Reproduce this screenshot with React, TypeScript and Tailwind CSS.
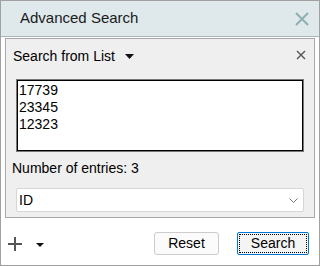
export default function App() {
  return (
    <div className="w-[320px] h-[266px] border border-[#a0a0a0] bg-white flex flex-col font-['Liberation_Sans',Arial,sans-serif] text-black">
      {/* Title bar */}
      <div className="h-[36px] shrink-0 bg-[#dfe9eb] border-b border-[#aab6b8] flex items-center justify-between pl-[19px] pr-[10px]">
        <span className="text-[15px] text-[#1a1a1a]">Advanced Search</span>
        <svg width="14" height="14" viewBox="0 0 14 14" className="mt-[1px]">
          <path d="M1 1 L13 13 M13 1 L1 13" stroke="#8eb0b2" strokeWidth="2" />
        </svg>
      </div>

      {/* Search from list panel */}
      <div className="mt-[1px] mx-[4px] h-[180px] shrink-0 border border-[#a8a8a8] bg-[#efefef] flex flex-col">
        <div className="h-[34px] flex items-center justify-between pl-[7px] pr-[8px]">
          <div className="flex items-center gap-[10px]">
            <span className="text-[14px]">Search from List</span>
            <svg width="9" height="5" viewBox="0 0 9 5">
              <path d="M0 0 H9 L4.5 5 Z" fill="#111" />
            </svg>
          </div>
          <svg width="10" height="10" viewBox="0 0 10 10" className="mb-[2px]">
            <path d="M1 1 L9 9 M9 1 L1 9" stroke="#555" strokeWidth="1.4" />
          </svg>
        </div>

        <div className="mx-[10px] mt-[6px] h-[73px] border border-[#777] bg-white shadow-[inset_0_0_0_1px_#000] pl-[2px] pt-[2px] text-[14px] leading-[17px]">
          <div>17739</div>
          <div>23345</div>
          <div>12323</div>
        </div>

        <div className="mt-[7px] h-[18px] leading-[18px] pl-[6px] text-[14px]">
          Number of entries: 3
        </div>

        <div className="mx-[10px] mt-[11px] h-[24px] border border-[#d6d6d6] rounded-[2px] bg-white flex items-center justify-between pl-[2px] pr-[5px]">
          <span className="text-[14px]">ID</span>
          <svg width="9" height="5" viewBox="0 0 9 5">
            <path d="M0.5 0.5 L4.5 4.5 L8.5 0.5" stroke="#777" strokeWidth="1" fill="none" />
          </svg>
        </div>
      </div>

      {/* Bottom toolbar */}
      <div className="flex-1 flex items-center justify-between pl-[7px] pr-[10px] pt-[3px]">
        <div className="flex items-center">
          <svg width="14" height="14" viewBox="0 0 14 14" className="mt-[1px]">
            <path d="M7 0 V14 M0 7 H14" stroke="#555" strokeWidth="2" />
          </svg>
          <svg width="8" height="4" viewBox="0 0 8 4" className="ml-[14px] mt-[3px]">
            <path d="M0 0 H8 L4 4 Z" fill="#111" />
          </svg>
        </div>
        <div className="flex items-center gap-[18px]">
          <button className="w-[65px] h-[23px] border border-[#cccccc] rounded-[3px] bg-[#fbfbfb] text-[14px] leading-none">
            Reset
          </button>
          <button className="w-[72px] h-[23px] border border-[#0078d7] rounded-[2px] bg-[#f4f4f4] p-[1px]">
            <span className="w-full h-full flex items-center justify-center border border-dotted border-black text-[14px] leading-none">
              Search
            </span>
          </button>
        </div>
      </div>
    </div>
  );
}
